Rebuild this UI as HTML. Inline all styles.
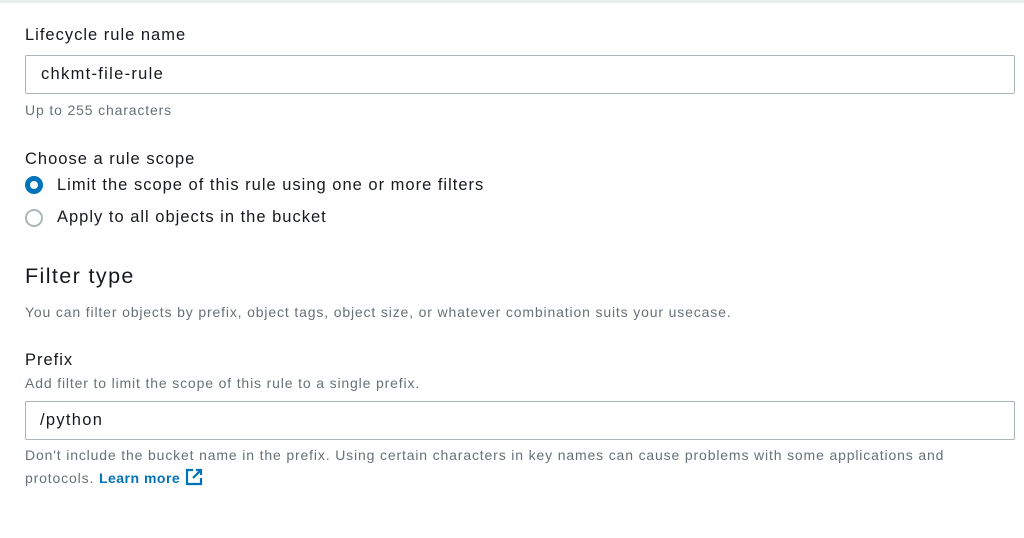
<!DOCTYPE html>
<html><head><meta charset="utf-8"><style>
body{margin:0;width:1024px;height:538px;background:#fff;font-family:"Liberation Sans",sans-serif;color:#16191f;position:relative;overflow:hidden}
.a{position:absolute;white-space:nowrap}
.lab{font-size:16.5px;letter-spacing:1px}
.help{font-size:14px;color:#687078;letter-spacing:0.85px}
.inp{position:absolute;left:25px;width:990px;height:36px;border:1px solid #aab7b8;border-radius:2px;font-size:16.5px;box-sizing:border-box;letter-spacing:1.3px}
.inp span{position:absolute;left:15px;top:8px}
.radio{position:absolute;left:25px;width:18px;height:18px;border-radius:50%;box-sizing:border-box}
</style></head><body>
<div style="position:absolute;left:0;top:0;width:1024px;height:3px;background:#eaeded"></div>
<div class="a lab" style="left:25px;top:26px">Lifecycle rule name</div>
<div class="inp" style="top:55px;height:39px"><span style="top:9px">chkmt-file-rule</span></div>
<div class="a help" style="left:25px;top:102px">Up to 255 characters</div>
<div class="a lab" style="left:25px;top:150px">Choose a rule scope</div>
<div class="radio" style="top:176px;border:5px solid #0073bb;background:#fff"></div>
<div class="a lab" style="left:57px;top:176px">Limit the scope of this rule using one or more filters</div>
<div class="radio" style="top:209px;border:2px solid #aab7b8"></div>
<div class="a lab" style="left:57px;top:208px">Apply to all objects in the bucket</div>
<div class="a" style="left:25px;top:264px;font-size:21.5px;letter-spacing:1.4px">Filter type</div>
<div class="a help" style="left:25px;top:304px">You can filter objects by prefix, object tags, object size, or whatever combination suits your usecase.</div>
<div class="a lab" style="left:25px;top:351px">Prefix</div>
<div class="a help" style="left:25px;top:375px">Add filter to limit the scope of this rule to a single prefix.</div>
<div class="inp" style="top:401px;height:39px"><span style="left:14px;top:9px">/python</span></div>
<div class="a help" style="left:25px;top:447px">Don't include the bucket name in the prefix. Using certain characters in key names can cause problems with some applications and</div>
<div class="a help" style="left:25px;top:468px">protocols. <b style="color:#0073bb;letter-spacing:0.5px">Learn more</b> <svg width="18" height="18" viewBox="0 0 18 18" style="vertical-align:-3px"><path d="M8 2H2v14h14v-6" fill="none" stroke="#0073bb" stroke-width="2.2"/><path d="M11 2h5v5M16 2L8 10" fill="none" stroke="#0073bb" stroke-width="2.2"/></svg></div>
</body></html>
